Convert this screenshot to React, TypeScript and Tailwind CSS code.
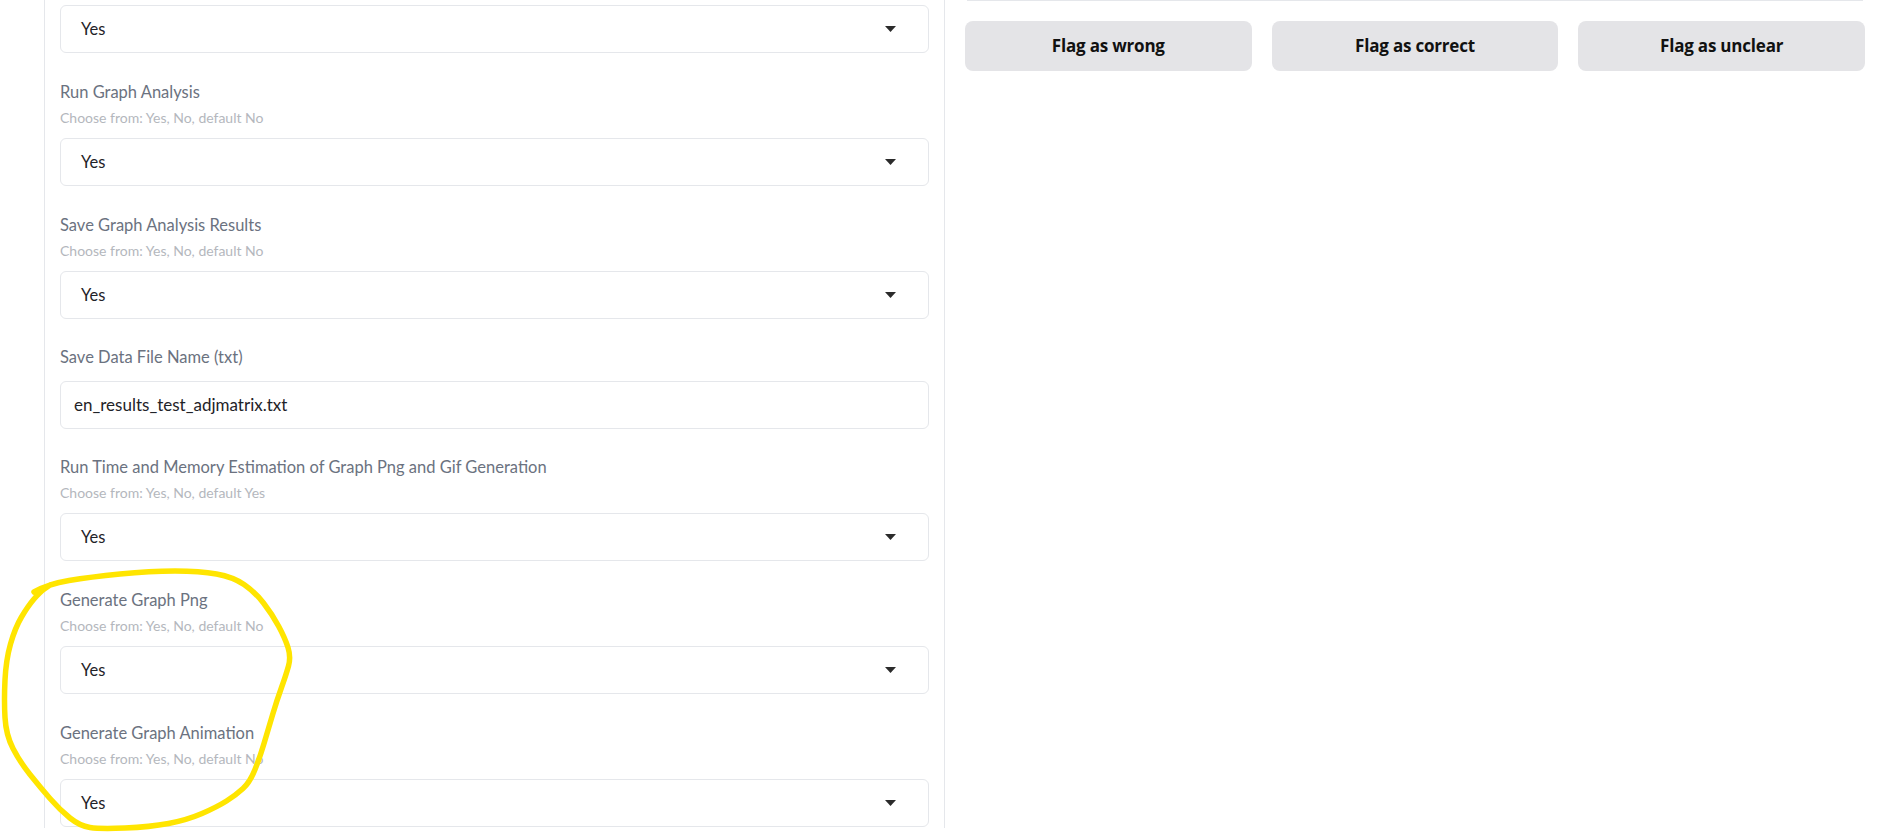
import React from 'react';

type Field =
  | { kind: 'select'; label: string; hint: string; value: string; gap: string }
  | { kind: 'text'; label: string; value: string; gap: string };

const fields: Field[] = [
  { kind: 'select', label: 'Run Graph Analysis', hint: 'Choose from: Yes, No, default No', value: 'Yes', gap: 'mt-[29px]' },
  { kind: 'select', label: 'Save Graph Analysis Results', hint: 'Choose from: Yes, No, default No', value: 'Yes', gap: 'mt-[29px]' },
  { kind: 'text', label: 'Save Data File Name (txt)', value: 'en_results_test_adjmatrix.txt', gap: 'mt-[28px]' },
  { kind: 'select', label: 'Run Time and Memory Estimation of Graph Png and Gif Generation', hint: 'Choose from: Yes, No, default Yes', value: 'Yes', gap: 'mt-[28px]' },
  { kind: 'select', label: 'Generate Graph Png', hint: 'Choose from: Yes, No, default No', value: 'Yes', gap: 'mt-[29px]' },
  { kind: 'select', label: 'Generate Graph Animation', hint: 'Choose from: Yes, No, default No', value: 'Yes', gap: 'mt-[29px]' },
];

// hand drawn highlight loop, traced from the screenshot
const loop: [number, number][] = [
  [34, 592], [48, 584], [90, 577], [150, 571], [200, 571], [233, 577], [255, 592], [272, 614],
  [285, 638], [291, 657], [286, 675], [277, 700], [268, 730], [260, 757], [250, 782], [236, 795],
  [217, 807], [187, 820], [150, 827], [100, 829], [80, 826], [60, 810], [40, 787], [20, 762],
  [6, 735], [4, 700], [6, 660], [15, 628], [28, 606], [40, 592], [50, 585],
];

function smoothPath(pts: [number, number][]) {
  let d = `M ${pts[0][0]} ${pts[0][1]}`;
  for (let i = 1; i < pts.length - 1; i++) {
    const mx = (pts[i][0] + pts[i + 1][0]) / 2;
    const my = (pts[i][1] + pts[i + 1][1]) / 2;
    d += ` Q ${pts[i][0]} ${pts[i][1]} ${mx} ${my}`;
  }
  const last = pts[pts.length - 1];
  d += ` L ${last[0]} ${last[1]}`;
  return d;
}

function Caret() {
  return (
    <svg width="11" height="6" viewBox="0 0 11 6" className="shrink-0">
      <path d="M0 0 L11 0 L5.5 6 Z" fill="#2b2b2b" />
    </svg>
  );
}

function SelectBox({ value }: { value: string }) {
  return (
    <div className="h-[48px] border border-[#e5e7eb] rounded-md bg-white flex items-center justify-between pl-[20px] pr-[32px]">
      <span className="text-[16.5px] text-[#1f2328]">{value}</span>
      <Caret />
    </div>
  );
}

export default function App() {
  return (
    <div className="relative w-[1897px] h-[834px] bg-white overflow-hidden" style={{ fontFamily: 'Lato, "Open Sans", sans-serif' }}>
      <div className="flex items-start pl-[44px] gap-5">
        <div className="w-[901px] h-[828px] border-l border-r border-[#e5e7eb] px-[15px] pt-[5px] shrink-0">
          <SelectBox value="Yes" />
          {fields.map((f) => (
            <div key={f.label} className={f.gap}>
              <div className="h-[20px] leading-[20px] text-[16.5px] text-[#6b7280]">{f.label}</div>
              {f.kind === 'select' ? (
                <>
                  <div className="mt-[6px] h-[20px] leading-[20px] text-[14px] text-[#b4b7bd]">{f.hint}</div>
                  <div className="mt-[10px]">
                    <SelectBox value={f.value} />
                  </div>
                </>
              ) : (
                <div className="mt-[14px] h-[48px] border border-[#e5e7eb] rounded-md bg-white flex items-center pl-[13px]">
                  <span className="text-[17px] text-[#1f2328]">{f.value}</span>
                </div>
              )}
            </div>
          ))}
        </div>

        <div className="w-[900px] shrink-0">
          <div className="h-px mx-[2px] bg-[#e5e7eb]" />
          <div className="mt-5 grid grid-cols-3 gap-5">
            {['Flag as wrong', 'Flag as correct', 'Flag as unclear'].map((t) => (
              <button
                key={t}
                className="h-[50px] rounded-lg bg-[#e4e4e7] text-[17px] font-bold tracking-[-0.2px] text-[#111111] font-['Open_Sans',sans-serif]"
              >
                {t}
              </button>
            ))}
          </div>
        </div>
      </div>

      <svg className="absolute left-0 top-0 pointer-events-none" width="1897" height="834">
        <path d={smoothPath(loop)} fill="none" stroke="#ffe500" strokeWidth="5.5" strokeLinecap="round" strokeLinejoin="round" />
      </svg>
    </div>
  );
}
